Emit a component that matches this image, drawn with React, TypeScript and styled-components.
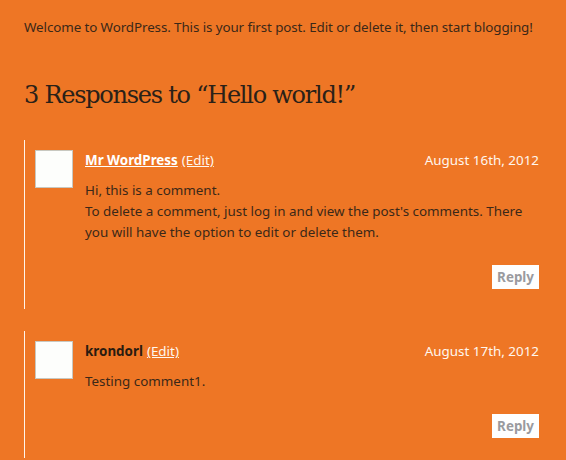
import React from 'react'
import styled, { createGlobalStyle } from 'styled-components'

interface CommentData {
  author: string
  authorLink: boolean
  date: string
  lines: string[]
}

const comments: CommentData[] = [
  {
    author: 'Mr WordPress',
    authorLink: true,
    date: 'August 16th, 2012',
    lines: [
      'Hi, this is a comment.',
      "To delete a comment, just log in and view the post's comments. There you will have the option to edit or delete them.",
    ],
  },
  {
    author: 'krondorl',
    authorLink: false,
    date: 'August 17th, 2012',
    lines: ['Testing comment1.'],
  },
]

const GlobalStyle = createGlobalStyle`
  html, body {
    margin: 0;
    padding: 0;
    background: #ee7625;
  }
  body {
    font-family: 'Noto Sans', 'Liberation Sans', sans-serif;
    color: #3b2818;
    overflow: hidden;
  }
`

const Page = styled.main`
  width: 566px;
  height: 460px;
  padding: 17px 27px 0 24px;
  box-sizing: border-box;
  background: #ee7625;
`

const Intro = styled.p`
  margin: 0;
  font-size: 13.4px;
  line-height: 21px;
  letter-spacing: -0.1px;
`

const Heading = styled.h2`
  margin: 41px 0 0;
  font-family: 'DejaVu Serif', 'Liberation Serif', serif;
  font-weight: 400;
  font-size: 24px;
  line-height: 32px;
  letter-spacing: -1.25px;
  color: #2a2118;
`

const List = styled.ol`
  list-style: none;
  margin: 29px 0 0;
  padding: 0;
  display: flex;
  flex-direction: column;
  gap: 22px;
`

const Item = styled.li`
  border-left: 1.5px solid #fff4ea;
  padding: 10px 0 20px 10px;
  display: flex;
  gap: 12px;
`

const Avatar = styled.div`
  flex: none;
  width: 36px;
  height: 36px;
  background: #fdfefc;
  border: 1px solid #c8c8c0;
`

const Body = styled.div`
  flex: 1;
  display: flex;
  flex-direction: column;
`

const Meta = styled.div`
  display: flex;
  justify-content: space-between;
  align-items: baseline;
  font-size: 13.4px;
  line-height: 20px;
  margin-top: 0;
`

const Author = styled.span<{ $link: boolean }>`
  font-weight: 700;
  color: ${(p) => (p.$link ? '#ffffff' : '#2a1c10')};
  text-decoration: ${(p) => (p.$link ? 'underline' : 'none')};
`

const EditLink = styled.span`
  color: #fff6ee;
  text-decoration: underline;
  margin-left: 4px;
`

const DateText = styled.span`
  color: #fff6ee;
`

const Text = styled.div`
  margin-top: 10px;
  font-size: 13.4px;
  line-height: 21px;
`

const Line = styled.p`
  margin: 0;
`

const ReplyRow = styled.div`
  display: flex;
  justify-content: flex-end;
  margin-top: 22px;
`

const Reply = styled.span`
  background: #fefefe;
  color: #9a9a9e;
  font-weight: 700;
  font-size: 13.4px;
  line-height: 24px;
  padding: 0 5px;
`

const Comment: React.FunctionComponent<{ c: CommentData }> = ({ c }) => (
  <Item>
    <Avatar />
    <Body>
      <Meta>
        <span>
          <Author $link={c.authorLink}>{c.author}</Author>
          <EditLink>(Edit)</EditLink>
        </span>
        <DateText>{c.date}</DateText>
      </Meta>
      <Text>
        {c.lines.map((l) => (
          <Line key={l}>{l}</Line>
        ))}
      </Text>
      <ReplyRow>
        <Reply>Reply</Reply>
      </ReplyRow>
    </Body>
  </Item>
)

export default function App() {
  return (
    <Page>
      <GlobalStyle />
      <Intro>Welcome to WordPress. This is your first post. Edit or delete it, then start blogging!</Intro>
      <Heading>3 Responses to “Hello world!”</Heading>
      <List>
        {comments.map((c) => (
          <Comment key={c.date} c={c} />
        ))}
      </List>
    </Page>
  )
}
